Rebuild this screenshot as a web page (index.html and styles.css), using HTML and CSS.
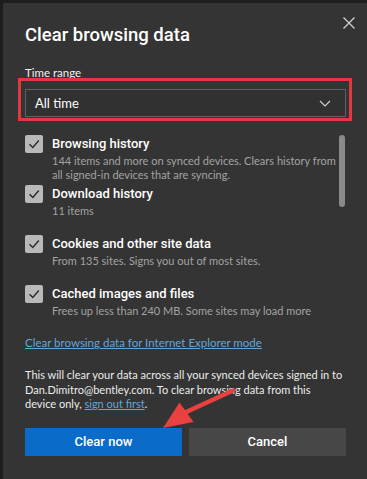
FILE: index.html
```html
<!DOCTYPE html>
<html lang="en">
<head>
<meta charset="utf-8">
<title>Clear browsing data</title>
<link rel="stylesheet" href="styles.css">
</head>
<body>
<div class="dialog">
  <button class="close" aria-label="Close">
    <svg width="12" height="12" viewBox="0 0 12 12"><path d="M0.5 0.5 L11.5 11.5 M11.5 0.5 L0.5 11.5" stroke="#d0d0d0" stroke-width="1.3" fill="none"/></svg>
  </button>
  <h1 class="title">Clear browsing data</h1>
  <div class="label">Time range</div>
  <div class="highlight">
    <div class="select">
      <span>All time</span>
      <svg class="chev" width="12" height="7" viewBox="0 0 12 7"><path d="M1 1 L6 6 L11 1" stroke="#cfcfcf" stroke-width="1.2" fill="none"/></svg>
    </div>
  </div>
  <div class="list">
    <div class="item">
      <span class="cb"><svg width="18" height="18" viewBox="0 0 18 18"><path d="M4.5 9.2 L7.8 12.5 L13.8 5.5" stroke="#2a2a2a" stroke-width="1.4" fill="none"/></svg></span>
      <div class="item-text">
        <div class="item-title">Browsing history</div>
        <div class="item-desc">144 items and more on synced devices. Clears history from all signed-in devices that are syncing.</div>
      </div>
    </div>
    <div class="item">
      <span class="cb"><svg width="18" height="18" viewBox="0 0 18 18"><path d="M4.5 9.2 L7.8 12.5 L13.8 5.5" stroke="#2a2a2a" stroke-width="1.4" fill="none"/></svg></span>
      <div class="item-text">
        <div class="item-title">Download history</div>
        <div class="item-desc">11 items</div>
      </div>
    </div>
    <div class="item">
      <span class="cb"><svg width="18" height="18" viewBox="0 0 18 18"><path d="M4.5 9.2 L7.8 12.5 L13.8 5.5" stroke="#2a2a2a" stroke-width="1.4" fill="none"/></svg></span>
      <div class="item-text">
        <div class="item-title">Cookies and other site data</div>
        <div class="item-desc">From 135 sites. Signs you out of most sites.</div>
      </div>
    </div>
    <div class="item">
      <span class="cb"><svg width="18" height="18" viewBox="0 0 18 18"><path d="M4.5 9.2 L7.8 12.5 L13.8 5.5" stroke="#2a2a2a" stroke-width="1.4" fill="none"/></svg></span>
      <div class="item-text">
        <div class="item-title">Cached images and files</div>
        <div class="item-desc">Frees up less than 240 MB. Some sites may load more</div>
      </div>
    </div>
    <div class="scrollbar"></div>
  </div>
  <a class="ie-link" href="#">Clear browsing data for Internet Explorer mode</a>
  <p class="note">This will clear your data across all your synced devices signed in to Dan.Dimitro@bentley.com. To clear browsing data from this<br>device only, <a href="#">sign out first</a>.</p>
  <div class="actions">
    <button class="btn primary">Clear now</button>
    <button class="btn secondary">Cancel</button>
  </div>
  <svg class="arrow" width="78" height="46" viewBox="0 0 78 46">
    <line x1="24" y1="26" x2="73" y2="3.5" stroke="#e8413f" stroke-width="4.5" stroke-linecap="round"/>
    <path d="M3 41 L19.5 15.5 L33.5 35 Z" fill="#e8413f"/>
  </svg>
</div>
</body>
</html>
```

FILE: styles.css
```css
* { box-sizing: border-box; }

html, body {
  margin: 0;
  height: 100%;
}

body {
  background: #1e1e1e;
  padding: 3px 0 0 3px;
  font-family: Lato, Roboto, "Liberation Sans", sans-serif;
  color: #ffffff;
  overflow: hidden;
}

.dialog {
  position: relative;
  width: 364px;
  height: 476px;
  background: #343434;
  padding: 18px 21px 0 22px;
  display: flex;
  flex-direction: column;
}

.close {
  position: absolute;
  top: 10px;
  right: 8px;
  width: 20px;
  height: 20px;
  padding: 4px;
  border: 0;
  background: transparent;
  display: flex;
  align-items: center;
  justify-content: center;
}

.title {
  margin: 0;
  font-family: Roboto, sans-serif;
  font-size: 18.5px;
  line-height: 28px;
  font-weight: 500;
  color: #ffffff;
}

.label {
  margin-top: 16px;
  font-size: 11.5px;
  line-height: 16px;
  color: #f0f0f0;
}

.highlight {
  margin: -3px -6px 0 -7px;
  border: 3px solid #e03a40;
  padding: 8px 3px 1px 4px;
}

.select {
  height: 28px;
  border: 1px solid #606060;
  background: #313131;
  padding: 0 14px 0 9px;
  display: flex;
  align-items: center;
  justify-content: space-between;
  font-size: 13px;
  color: #ffffff;
}

.list {
  position: relative;
  margin-top: 13px;
  display: flex;
  flex-direction: column;
  gap: 1px;
}

.item {
  min-height: 49px;
  display: flex;
  align-items: flex-start;
  gap: 9px;
}

.cb {
  flex: none;
  width: 18px;
  height: 18px;
  margin-top: 1px;
  border-radius: 2px;
  background: #b9b9b9;
  display: flex;
}

.item-text {
  flex: 1;
  padding-right: 10px;
}

.item-title {
  font-family: Roboto, sans-serif;
  font-size: 13px;
  line-height: 20px;
  font-weight: 500;
  color: #ffffff;
}

.item-desc {
  font-size: 11px;
  line-height: 14px;
  color: #a3a3a3;
}

.scrollbar {
  position: absolute;
  top: 1px;
  right: 1px;
  width: 6px;
  height: 72px;
  border-radius: 3px;
  background: #8a8a8a;
}

.ie-link {
  margin-top: 2px;
  font-size: 11.5px;
  line-height: 16px;
  color: #62a7dc;
  text-decoration: underline;
  align-self: flex-start;
}

.note {
  margin: 17px 0 0;
  font-size: 11px;
  line-height: 14.5px;
  color: #ececec;
}

.note a {
  color: #62a7dc;
}

.actions {
  margin-top: 16px;
  display: grid;
  grid-template-columns: 1fr 1fr;
  gap: 7px;
}

.btn {
  height: 28px;
  border: 0;
  font-family: Roboto, sans-serif;
  font-size: 13px;
  font-weight: 500;
  color: #ffffff;
}

.primary {
  background: #0a6bc8;
}

.secondary {
  background: #474747;
}

.arrow {
  position: absolute;
  left: 157px;
  top: 384px;
}
```
